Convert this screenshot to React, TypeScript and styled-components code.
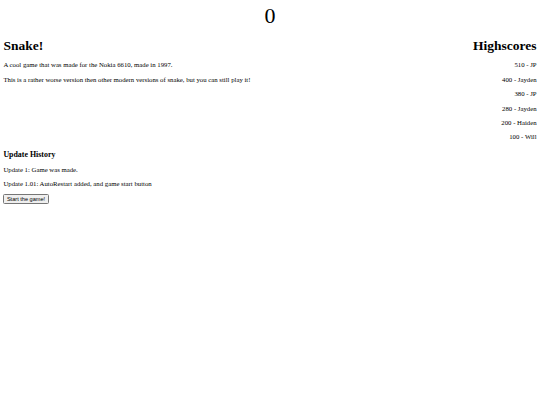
import React from "react"
import styled, { createGlobalStyle } from "styled-components"

// the reference is a 1280px wide page shown at 540px, so every size is scaled by 0.421875
const GlobalStyle = createGlobalStyle`
  body {
    margin: 3.4px;
    font-family: "Liberation Serif", "Times New Roman", serif;
    font-size: 6.75px;
    color: #000;
    background: #fff;
  }
`

const Score = styled.div`
  text-align: center;
  font-size: 22px;
`

const Columns = styled.div`
  display: flex;
  justify-content: space-between;
  align-items: flex-start;
`

const Column = styled.div<{ right?: boolean }>`
  text-align: ${(props) => (props.right ? "right" : "left")};

  & > p:last-child {
    margin-bottom: 0;
  }
`

const Title = styled.h1`
  font-size: 13.5px;
  margin: 9px 0 7px;
`

const Text = styled.p`
  font-size: 6.75px;
  line-height: 7.65px;
  margin: 6.75px 0;
`

const SubTitle = styled.h3`
  font-size: 7.9px;
  margin: 8.5px 0 7px;
`

const StartButton = styled.button`
  font-family: "Liberation Sans", Arial, sans-serif;
  font-size: 5.6px;
  padding: 0.7px 2.5px;
  border: 1px solid #767676;
  border-radius: 1.5px;
  background: #efefef;
  color: #000;
`

const highscores = [
  { score: 510, name: "JP" },
  { score: 400, name: "Jayden" },
  { score: 380, name: "JP" },
  { score: 280, name: "Jayden" },
  { score: 200, name: "Haiden" },
  { score: 100, name: "Will" },
]

export default function App() {
  return (
    <>
      <GlobalStyle />
      <Score>0</Score>
      <Columns>
        <Column>
          <Title>Snake!</Title>
          <Text>A cool game that was made for the Nokia 6610, made in 1997.</Text>
          <Text>
            This is a rather worse version then other modern versions of snake, but you can still
            play it!
          </Text>
        </Column>
        <Column right>
          <Title>Highscores</Title>
          {highscores.map((h, i) => (
            <Text key={i}>
              {h.score} - {h.name}
            </Text>
          ))}
        </Column>
      </Columns>
      <SubTitle>Update History</SubTitle>
      <Text>Update 1: Game was made.</Text>
      <Text>Update 1.01: AutoRestart added, and game start button</Text>
      <StartButton>Start the game!</StartButton>
    </>
  )
}
